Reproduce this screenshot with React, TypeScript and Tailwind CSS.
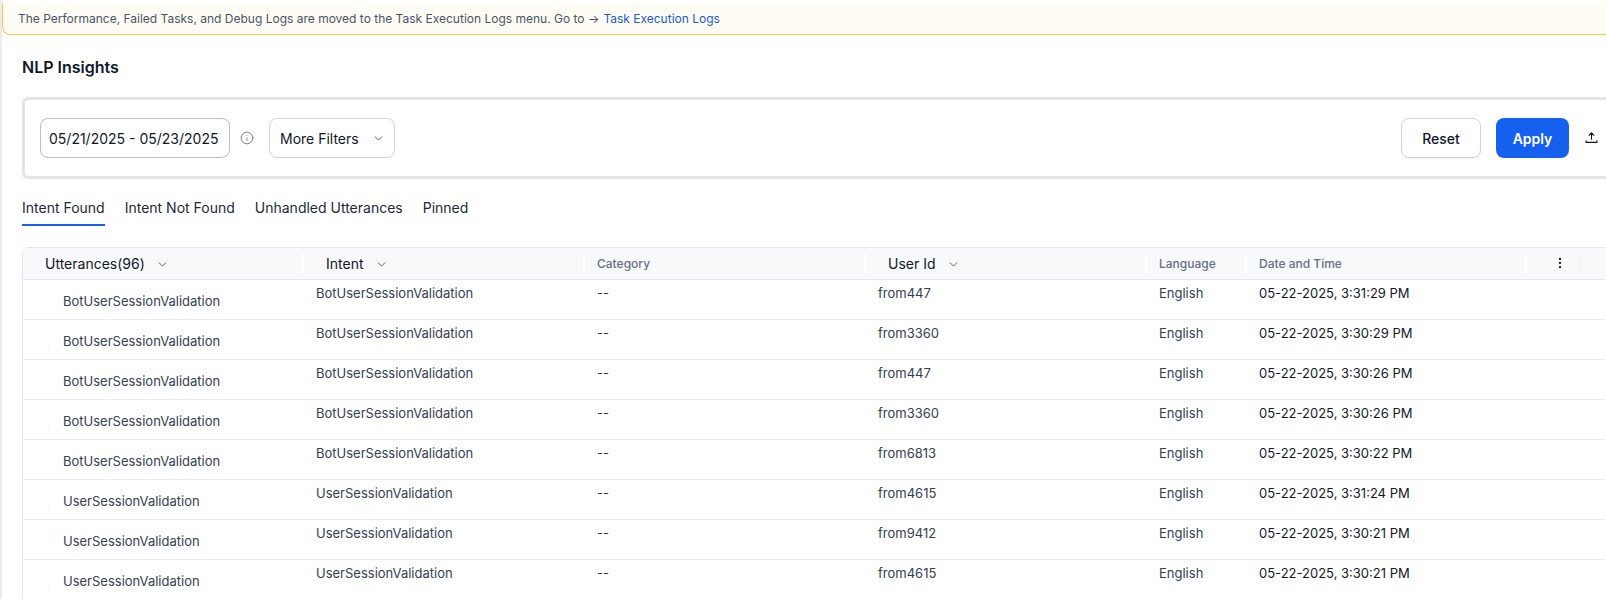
import React from 'react';
import { ChevronDown, EllipsisVertical, Info } from 'lucide-react';

const rows = [
    ['BotUserSessionValidation', 'from447', '05-22-2025, 3:31:29 PM'],
    ['BotUserSessionValidation', 'from3360', '05-22-2025, 3:30:29 PM'],
    ['BotUserSessionValidation', 'from447', '05-22-2025, 3:30:26 PM'],
    ['BotUserSessionValidation', 'from3360', '05-22-2025, 3:30:26 PM'],
    ['BotUserSessionValidation', 'from6813', '05-22-2025, 3:30:22 PM'],
    ['UserSessionValidation', 'from4615', '05-22-2025, 3:31:24 PM'],
    ['UserSessionValidation', 'from9412', '05-22-2025, 3:30:21 PM'],
    ['UserSessionValidation', 'from4615', '05-22-2025, 3:30:21 PM'],
];

const cols = 'grid grid-cols-[281px_281px_281px_281px_100px_280px_54px_1fr]';

const SortHead = ({ label }: { label: string }) => (
    <div className="flex h-[19px] items-center border-r-2 border-white pl-[22px]">
        <span className="text-[14px] leading-none text-[#101828]">{label}</span>
        <ChevronDown size={13} strokeWidth={1.75} className="ml-[11px] mt-[2px] text-[#475467]" />
    </div>
);

const PlainHead = ({ label }: { label: string }) => (
    <div className="flex h-[19px] items-center border-r-2 border-white pl-[12px]">
        <span className="text-[12px] font-medium leading-none text-[#667085]">{label}</span>
    </div>
);

const App = () => {
    return (
        <div className="h-[599px] w-[1606px] overflow-hidden border-l-2 border-[#ececec] bg-white font-['Inter',sans-serif] text-[#101828]">
            {/* Notice */}
            <div className="mt-[3px] flex h-[32px] items-center rounded-bl-lg border-b border-l border-[#fdc84a] bg-[#fffcf5] pl-[15px] text-[12px] text-[#475467]">
                <span>The Performance, Failed Tasks, and Debug Logs are moved to the Task Execution Logs menu. Go to → </span>
                <span className="ml-1 text-[#175cd3]">Task Execution Logs</span>
            </div>

            <h1 className="ml-[20px] mt-[22px] text-[16px] font-semibold leading-[20px]">NLP Insights</h1>

            {/* Filters */}
            <div className="ml-[20px] mt-[20px] flex h-[82px] w-[1620px] items-center justify-between rounded-l-md border-[3px] border-r-0 border-[#e4e4e4] pl-[15px] pr-[44px]">
                <div className="flex items-center">
                    <div className="flex h-[40px] w-[190px] items-center rounded-lg border border-[#b9bdc9] pl-[8px] text-[14px]">
                        05/21/2025 - 05/23/2025
                    </div>
                    <Info size={14} strokeWidth={1.5} className="ml-[10px] text-[#667085]" />
                    <div className="ml-[15px] flex h-[40px] w-[126px] items-center rounded-lg border border-[#d0d5dd] pl-[10px] text-[14px]">
                        More Filters
                        <ChevronDown size={13} strokeWidth={1.75} className="ml-[13px] text-[#475467]" />
                    </div>
                </div>
                <div className="flex items-center">
                    <button className="h-[40px] w-[80px] rounded-lg border border-[#d0d5dd] text-[14px] font-medium shadow-xs">Reset</button>
                    <button className="ml-[15px] h-[40px] w-[73px] rounded-lg bg-[#1660f0] text-[14px] font-semibold text-white">Apply</button>
                    <svg width="13" height="13" viewBox="0 0 12 12" fill="none" stroke="#101828" strokeWidth="1" className="-mt-[2px] ml-[16px]">
                        <path d="M6 8V2M3.5 4.2 6 1.7l2.5 2.5M1 8.5v2h10v-2" />
                    </svg>
                </div>
            </div>

            {/* Tabs */}
            <div className="ml-[20px] mt-[19px] flex gap-[20px] text-[14px] text-[#1d2939]">
                <div className="h-[28px] border-b-2 border-[#1660f0] leading-[20px]">Intent Found</div>
                <div className="leading-[20px]">Intent Not Found</div>
                <div className="leading-[20px]">Unhandled Utterances</div>
                <div className="leading-[20px]">Pinned</div>
            </div>

            {/* Table */}
            <div className="ml-[20px] mt-[21px] w-[1620px] rounded-tl-md border-l border-t border-[#e4e7ec]">
                <div className={`${cols} h-[32px] items-center border-b border-[#e4e7ec] bg-[#f8f9fb]`}>
                    <SortHead label="Utterances(96)" />
                    <SortHead label="Intent" />
                    <PlainHead label="Category" />
                    <SortHead label="User Id" />
                    <PlainHead label="Language" />
                    <PlainHead label="Date and Time" />
                    <div className="flex h-[19px] items-center justify-center border-r border-[#f1f2f5] pl-[12px]">
                        <EllipsisVertical size={14} className="-mt-[1px] text-[#101828]" />
                    </div>
                    <div />
                </div>
                {rows.map((r, i) => (
                    <div key={i} className={`${cols} h-[40px] border-b border-[#eaecf0] text-[13px] text-[#344054]`}>
                        <div className="flex items-center pl-[40px] pt-[4px]">{r[0]}</div>
                        <div className="pl-[12px] pt-[4px]">{r[0]}</div>
                        <div className="pl-[12px] pt-[4px]">--</div>
                        <div className="pl-[12px] pt-[4px]">{r[1]}</div>
                        <div className="pl-[12px] pt-[4px]">English</div>
                        <div className="pl-[12px] pt-[4px] text-[#101828]">{r[2]}</div>
                        <div />
                        <div />
                    </div>
                ))}
            </div>
        </div>
    );
};

export default App;
